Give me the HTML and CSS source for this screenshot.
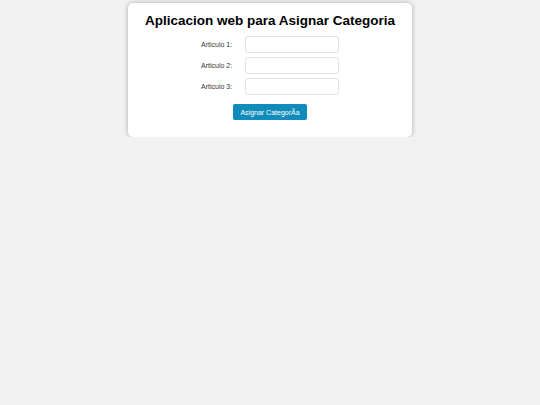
FILE: index.html
```html
<!DOCTYPE html>
<html lang="es">
<head>
    <meta charset="UTF-8">
    <meta name="viewport" content="width=device-width, initial-scale=1.0">
    <title>Asignar Categoria</title>
    <link rel="stylesheet" href="styles.css">
</head>
<body>

<div class="container">
    <h1>Aplicacion web para Asignar Categoria</h1>
    <form class="formulario">
        <div class="fila">
            <label for="articulo1">Articulo 1:</label>
            <input type="text" id="articulo1">
        </div>
        <div class="fila">
            <label for="articulo2">Articulo 2:</label>
            <input type="text" id="articulo2">
        </div>
        <div class="fila">
            <label for="articulo3">Articulo 3:</label>
            <input type="text" id="articulo3">
        </div>
        <button type="button" class="btn">Asignar CategorÃ&shy;a</button>
    </form>
</div>

</body>
</html>
```

FILE: styles.css
```css
body {
    font-family: 'Liberation Sans', Arial, sans-serif;
    margin: 0;
    background-color: #f2f2f2;
    color: #000;
}
.container {
    width: 284px;
    margin: 3px auto 0;
    padding: 10px 0 17px;
    background-color: #fff;
    border-radius: 5px;
    box-shadow: 0 0 5px rgba(0,0,0,0.3);
    text-align: center;
    box-sizing: border-box;
}
h1 {
    font-size: 13.5px;
    margin: 0 0 7px;
    line-height: 16px;
}
.formulario {
    display: flex;
    flex-direction: column;
    align-items: center;
    gap: 4px;
}
.fila {
    display: flex;
    align-items: center;
    gap: 14px;
}
.fila label {
    font-size: 7px;
    width: 30px;
    white-space: nowrap;
    text-align: left;
    color: #333;
}
.fila input {
    width: 94px;
    height: 17px;
    box-sizing: border-box;
    border: 1px solid #e2e2e2;
    border-radius: 3px;
    padding: 2px 4px;
    margin: 0;
}
.btn {
    margin-top: 5px;
    width: 74px;
    height: 16px;
    padding: 0;
    background-color: #108cbc;
    color: #fff;
    border: none;
    border-radius: 2px;
    font-family: 'Liberation Sans', Arial, sans-serif;
    font-size: 7px;
    cursor: pointer;
}
```
